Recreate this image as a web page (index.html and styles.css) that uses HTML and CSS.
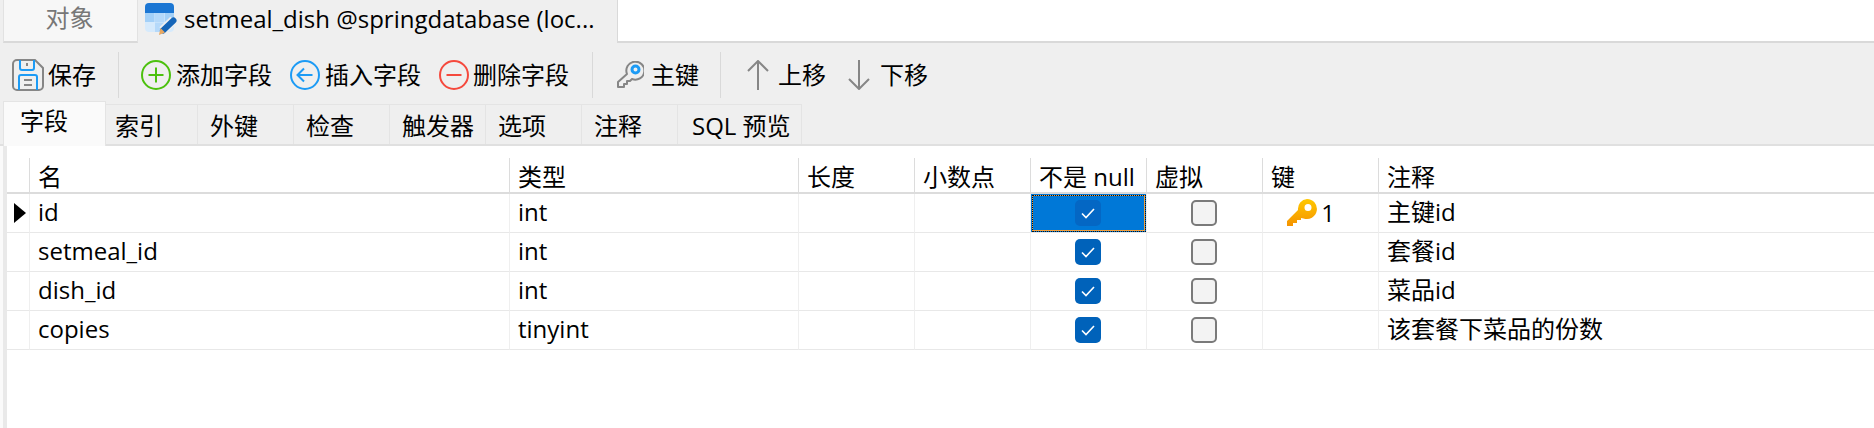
FILE: index.html
```html
<!DOCTYPE html>
<html>
<head>
    <title>setmeal_dish @springdatabase</title>
    <link rel="stylesheet" href="styles.css">
</head>
<body>
    <div class="doc-tabs">
        <div class="doc-tab">对象</div>
        <div class="doc-tab current">
            <svg class="doc-icon" viewBox="0 0 33 32">
                <rect x="0" y="0" width="29" height="29" rx="4" fill="#d6eafc"/>
                <path d="M0 10V4a4 4 0 0 1 4-4h21a4 4 0 0 1 4 4v6z" fill="#1b76d3"/>
                <rect x="0" y="10" width="9.5" height="9" fill="#a3d0f8"/>
                <rect x="10" y="10" width="9.5" height="9" fill="#b5d9fa"/>
                <rect x="20" y="10" width="9" height="9" fill="#a3d0f8"/>
                <rect x="10" y="19.5" width="9.5" height="9.5" fill="#b5d9fa"/>
                <path d="M17.5 27.5L28.5 17" stroke="#efefef" stroke-width="9"/>
                <path d="M18 27.5L28.5 17.5" stroke="#1565b8" stroke-width="6" stroke-linecap="round"/>
                <path d="M15.5 25l4.5 4.5-6 2.5z" fill="#e8a862"/>
            </svg>
            <span>setmeal_dish @springdatabase (loc...</span>
        </div>
        <div class="doc-rest"></div>
    </div>

    <div class="toolbar">
        <div class="tool save">
            <svg class="icon-save" viewBox="0 0 32 32" fill="none">
                <path d="M5 1h18l8 8v18a4 4 0 0 1-4 4H5a4 4 0 0 1-4-4V5a4 4 0 0 1 4-4z" stroke="#868686" stroke-width="2"/>
                <path d="M8 1v8a2 2 0 0 0 2 2h10a2 2 0 0 0 2-2V1" stroke="#1c9bf5" stroke-width="2"/>
                <path d="M15 4v3" stroke="#868686" stroke-width="2"/>
                <path d="M7 31V18a2 2 0 0 1 2-2h14a2 2 0 0 1 2 2v13" stroke="#1c9bf5" stroke-width="2"/>
                <path d="M12 21h8M12 26h8" stroke="#868686" stroke-width="2"/>
            </svg>
            保存
        </div>
        <div class="sep sep-first"></div>
        <div class="tool add">
            <svg class="icon-round" viewBox="0 0 30 30" fill="none">
                <circle cx="15" cy="15" r="14" stroke="#4cc10e" stroke-width="2"/>
                <path d="M15 7.5v15M7.5 15h15" stroke="#4cc10e" stroke-width="2"/>
            </svg>
            添加字段
        </div>
        <div class="tool insert">
            <svg class="icon-round" viewBox="0 0 30 30" fill="none">
                <circle cx="15" cy="15" r="14" stroke="#1c9bf5" stroke-width="2"/>
                <path d="M7.5 15h15M14 8.5L7.5 15l6.5 6.5" stroke="#1c9bf5" stroke-width="2"/>
            </svg>
            插入字段
        </div>
        <div class="tool remove">
            <svg class="icon-round" viewBox="0 0 30 30" fill="none">
                <circle cx="15" cy="15" r="14" stroke="#f5493d" stroke-width="2"/>
                <path d="M7.5 15h15" stroke="#f5493d" stroke-width="2"/>
            </svg>
            删除字段
        </div>
        <div class="sep sep-second"></div>
        <div class="tool key">
            <svg class="icon-key" viewBox="0 0 28 28" fill="none">
                <path d="M11 13a9 9 0 1 1 5 5l-2 2h-3v3H8v3H2v-5z" stroke="#868686" stroke-width="2" stroke-linejoin="round"/>
                <circle cx="19.5" cy="8.5" r="3.5" stroke="#1c9bf5" stroke-width="3"/>
            </svg>
            主键
        </div>
        <div class="sep sep-third"></div>
        <div class="tool up">
            <svg class="icon-arrow" viewBox="0 0 22 30" fill="none">
                <path d="M11 30V1M1 11L11 1l10 10" stroke="#868686" stroke-width="2"/>
            </svg>
            上移
        </div>
        <div class="tool down">
            <svg class="icon-arrow" viewBox="0 0 22 30" fill="none">
                <path d="M11 0v29M1 19l10 10 10-10" stroke="#868686" stroke-width="2"/>
            </svg>
            下移
        </div>
    </div>

    <div class="tabs">
        <div class="tab active">字段</div>
        <div class="tab second">索引</div>
        <div class="tab">外键</div>
        <div class="tab">检查</div>
        <div class="tab">触发器</div>
        <div class="tab">选项</div>
        <div class="tab">注释</div>
        <div class="tab sql">SQL 预览</div>
    </div>

    <div class="pane">
        <div class="content">
            <table class="fields">
                <thead>
                    <tr>
                        <th class="c-mark"></th>
                        <th class="c-name">名</th>
                        <th class="c-type">类型</th>
                        <th class="c-num">长度</th>
                        <th class="c-num">小数点</th>
                        <th class="c-num">不是 null</th>
                        <th class="c-num">虚拟</th>
                        <th class="c-num">键</th>
                        <th>注释</th>
                    </tr>
                </thead>
                <tbody>
                    <tr>
                        <td class="mark"><span class="arrow"></span></td>
                        <td>id</td>
                        <td>int</td>
                        <td></td>
                        <td></td>
                        <td class="check selected"><span class="box on"><svg viewBox="0 0 26 26"><path d="M7 13.5l4 4 8-8.5"/></svg></span></td>
                        <td class="check"><span class="box"></span></td>
                        <td class="keycell">
                            <svg class="icon-gold" viewBox="0 0 30 27">
                                <defs>
                                    <linearGradient id="gold" x1="0" y1="0" x2="0" y2="1">
                                        <stop offset="0" stop-color="#ffc800"/>
                                        <stop offset="1" stop-color="#f59300"/>
                                    </linearGradient>
                                </defs>
                                <path fill="url(#gold)" fill-rule="evenodd" d="M20 0a10 10 0 1 1-3.5 19.4L14 19v2h-4v3H6v3H0v-5L11 11A10 10 0 0 1 20 0zm1 5a3.5 3.5 0 1 0 0 7 3.5 3.5 0 0 0 0-7z"/>
                            </svg>
                            1
                        </td>
                        <td>主键id</td>
                    </tr>
                    <tr>
                        <td class="mark"></td>
                        <td>setmeal_id</td>
                        <td>int</td>
                        <td></td>
                        <td></td>
                        <td class="check"><span class="box on"><svg viewBox="0 0 26 26"><path d="M7 13.5l4 4 8-8.5"/></svg></span></td>
                        <td class="check"><span class="box"></span></td>
                        <td></td>
                        <td>套餐id</td>
                    </tr>
                    <tr>
                        <td class="mark"></td>
                        <td>dish_id</td>
                        <td>int</td>
                        <td></td>
                        <td></td>
                        <td class="check"><span class="box on"><svg viewBox="0 0 26 26"><path d="M7 13.5l4 4 8-8.5"/></svg></span></td>
                        <td class="check"><span class="box"></span></td>
                        <td></td>
                        <td>菜品id</td>
                    </tr>
                    <tr>
                        <td class="mark"></td>
                        <td>copies</td>
                        <td>tinyint</td>
                        <td></td>
                        <td></td>
                        <td class="check"><span class="box on"><svg viewBox="0 0 26 26"><path d="M7 13.5l4 4 8-8.5"/></svg></span></td>
                        <td class="check"><span class="box"></span></td>
                        <td></td>
                        <td>该套餐下菜品的份数</td>
                    </tr>
                </tbody>
            </table>
        </div>
    </div>
</body>
</html>
```

FILE: styles.css
```css
* { box-sizing: border-box; }
html, body { height: 100%; }
body { margin: 0; background: #efefef; color: #000; font-family: "Open Sans", "Noto Sans CJK SC", sans-serif; font-size: 24px; line-height: 32px; display: flex; flex-direction: column; overflow: hidden; }

.doc-tabs { display: flex; height: 43px; padding-left: 3px; flex: none; }
.doc-tab { width: 135px; padding: 0 2px 6px 0; background: #f7f7f7; color: #777; border: 1px solid #e2e2e2; border-top: none; border-bottom-width: 2px; border-bottom-color: #d9d9d9; display: flex; align-items: center; justify-content: center; }
.doc-tab.current { width: 479px; background: #efefef; color: #000; border: none; justify-content: flex-start; padding: 0 0 5px 7px; gap: 6px; white-space: nowrap; }
.doc-icon { width: 33px; height: 32px; flex: none; }
.doc-rest { flex: 1; background: #fff; border-bottom: 2px solid #d9d9d9; border-left: 1px solid #d9d9d9; }

.toolbar { display: flex; align-items: center; height: 61px; padding: 3px 0 0 12px; flex: none; }
.tool { display: flex; align-items: center; white-space: nowrap; gap: 5px; }
.tool.save { gap: 4px; }
.tool.insert { margin-left: 18px; }
.tool.remove { margin-left: 18px; gap: 4px; }
.tool.down { margin-left: 22px; gap: 10px; }
.tool.up { gap: 9px; }
.tool.key { gap: 7px; }
.sep { width: 1px; height: 46px; background: #d9d9d9; }
.sep-first { margin: 0 22px 0 22px; }
.sep-second { margin: 0 23px 0 23px; }
.sep-third { margin: 0 26px 0 21px; }
.icon-save { width: 32px; height: 32px; }
.icon-round { width: 30px; height: 30px; }
.icon-key { width: 28px; height: 28px; }
.icon-arrow { width: 22px; height: 30px; }

.tabs { display: flex; align-items: flex-end; height: 42px; padding-left: 3px; flex: none; border-bottom: 2px solid #e0e0e0; }
.tab { width: 96px; height: 40px; padding: 0 12px; background: #efefef; border: 1px solid #e4e4e4; border-left: none; border-bottom: none; line-height: 42px; white-space: nowrap; }
.tab.active { width: 103px; height: 45px; margin-bottom: -2px; padding: 0 16px; background: #fafafa; border-left: 1px solid #e4e4e4; line-height: 38px; position: relative; }
.tab.second { width: 92px; padding-left: 9px; }
.tab.sql { width: 124px; padding-left: 14px; }

.pane { flex: 1; display: flex; padding-left: 3px; background: #fafafa; }
.content { flex: 1; min-width: 0; border-left: 4px solid #e9e9e9; background: #fff; padding-top: 12px; }
.fields { width: 100%; table-layout: fixed; border-collapse: separate; border-spacing: 0; }
.fields th, .fields td { padding: 0 0 0 8px; text-align: left; font-weight: 400; white-space: nowrap; overflow: hidden; }
.fields th { height: 36px; padding-top: 4px; border-right: 1px solid #dcdcdc; border-bottom: 2px solid #dcdcdc; line-height: 30px; }
.fields th:last-child, .fields td:last-child { border-right: none; }
.fields td { height: 39px; padding-bottom: 2px; border-right: 1px solid #efefef; border-bottom: 1px solid #e8e8e8; }
.c-mark { width: 23px; }
.c-name { width: 480px; }
.c-type { width: 289px; }
.c-num { width: 116px; }

.fields td.mark { padding: 0 0 0 7px; }
.arrow { display: block; width: 0; height: 0; border-left: 12px solid #000; border-top: 10px solid transparent; border-bottom: 10px solid transparent; }
.fields td.check { padding: 0 2px 0 0; text-align: center; line-height: 0; }
.box { display: inline-block; width: 26px; height: 26px; border-radius: 5px; background: #f3f3f3; border: 2px solid #7a7a7a; }
.box.on { background: #0062ba; border: none; }
.box svg { display: block; width: 26px; height: 26px; fill: none; stroke: #fff; stroke-width: 1.6; }
.fields td.selected { background: #0078d7; box-shadow: inset 0 0 0 1px #0078d7, inset 0 0 0 2px #f0a040; outline: 1px dotted #111; outline-offset: -2px; }
.selected .box.on { background: #0467c4; }
.fields td.keycell { padding: 0 0 0 24px; }
.icon-gold { width: 30px; height: 27px; vertical-align: -4px; margin-right: -2px; }
```
